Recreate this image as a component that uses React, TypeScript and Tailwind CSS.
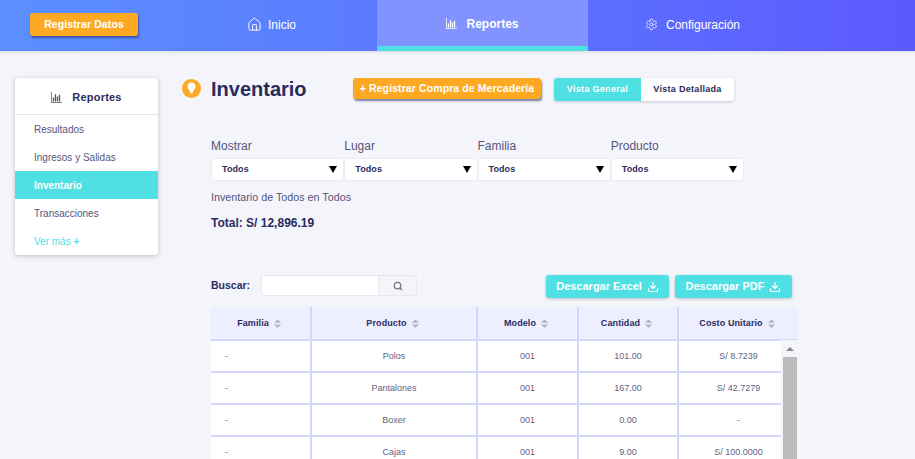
import { Download, House, Search, Settings } from 'lucide-react'

function ChartIcon({ className }: { className: string }) {
  return (
    <svg viewBox="0 0 12 12" className={className} fill="currentColor">
      <path d="M0 0h.8v11.2H12v.8H0z" />
      <path d="M2 6h1.4v4.4H2zM4.2 2.5h1.4v7.9H4.2zM6.4 5h1.4v5.4H6.4zM8.6 3h1.4v7.4H8.6z" />
    </svg>
  )
}

function SortIcon() {
  return (
    <svg viewBox="0 0 8 10" className="ml-[5px] h-[9px] w-[7px] text-[#b4b5c4]" fill="currentColor">
      <path d="M4 0l4 4H0zM4 10L0 6h8z" />
    </svg>
  )
}

function Select() {
  return (
    <div className="flex h-[23px] flex-1 items-center justify-between rounded-[2px] border border-[#eceef4] bg-white pl-[10px] pr-[6px] text-[9px] font-bold tracking-[0.1px] text-[#2b2b5e]">
      <span>Todos</span>
      <svg viewBox="0 0 8 7" className="h-[7px] w-2 text-black" fill="currentColor">
        <path d="M0 0h8L4 7z" />
      </svg>
    </div>
  )
}

const sidebarItems = ['Resultados', 'Ingresos y Salidas', 'Inventario', 'Transacciones']
const filters = ['Mostrar', 'Lugar', 'Familia', 'Producto']
const columns = [
  { label: 'Familia', w: 'w-[101px]' },
  { label: 'Producto', w: 'w-[166px]' },
  { label: 'Modelo', w: 'w-[101px]' },
  { label: 'Cantidad', w: 'w-[100px]' },
  { label: 'Costo Unitario', w: 'flex-1' },
]
const rows = [
  ['-', 'Polos', '001', '101.00', 'S/ 8.7239'],
  ['-', 'Pantalones', '001', '167.00', 'S/ 42.7279'],
  ['-', 'Boxer', '001', '0.00', '-'],
  ['-', 'Cajas', '001', '9.00', 'S/ 100.0000'],
]

export default function App() {
  return (
    <div className="h-[459px] overflow-hidden bg-[#f4f5fa] font-['Liberation_Sans',Arial,sans-serif]">
      <header className="flex h-[51px] bg-gradient-to-r from-[#5b8fff] to-[#5c59ff] shadow-[0_1px_3px_rgba(0,0,0,0.12)]">
        <div className="flex w-[166px] items-start pl-[30px] pt-[13px]">
          <button className="h-[23px] w-[108px] rounded-[3px] bg-[#fea922] text-[10.5px] font-bold tracking-[0.1px] text-white shadow-[1px_2px_2px_rgba(40,50,110,0.6)]">
            Registrar Datos
          </button>
        </div>
        <div className="flex w-[211px] items-center justify-center gap-[6px] pb-[3px] pt-[1px] text-[12px] text-white">
          <House className="h-[15px] w-[15px]" strokeWidth={1.5} />
          Inicio
        </div>
        <div className="flex w-[211px] items-center justify-center gap-[9px] border-b-[5px] border-[#4fe0e4] bg-[#8093ff] pt-[1px] text-[12px] font-bold text-white">
          <ChartIcon className="h-[11px] w-[11px]" />
          Reportes
        </div>
        <div className="flex w-[211px] items-center justify-center gap-[8px] pb-[3px] pr-[2px] pt-[1px] text-[12px] text-white">
          <Settings className="h-[13px] w-[13px]" strokeWidth={1.4} />
          Configuración
        </div>
      </header>

      <div className="flex pl-[15px] pt-[27px]">
        <aside className="h-[177px] w-[143px] overflow-hidden rounded-[3px] bg-white shadow-[0_1px_4px_rgba(60,60,90,0.3)]">
          <div className="flex h-[37px] items-center justify-center gap-[10px] border-b border-[#e4e5ea] pt-[2px] text-[11px] font-bold tracking-[0.2px] text-[#2b2b5e]">
            <ChartIcon className="h-[11px] w-[11px] text-[#555]" />
            Reportes
          </div>
          {sidebarItems.map((item) => (
            <div
              key={item}
              className={
                item === 'Inventario'
                  ? 'flex h-[28px] items-center bg-[#4fe0e4] pl-[19px] text-[10px] font-bold text-white'
                  : 'flex h-[28px] items-center pl-[19px] text-[10px] text-[#55557a]'
              }
            >
              {item}
            </div>
          ))}
          <div className="flex h-[28px] items-center pl-[19px] text-[10px] text-[#4fe0e4]">Ver más&nbsp;<span className="font-bold">+</span></div>
        </aside>

        <main className="ml-[24px] w-[616px]">
          <div className="flex h-[23px] items-start">
            <svg viewBox="0 0 19 19" className="mt-[1px] h-[19px] w-[19px]">
              <circle cx="9.5" cy="9.5" r="9.5" fill="#fea922" />
              <path d="M9.5 3.6a4 4 0 0 1 4 4c0 1.8-1.2 2.7-2 4.2-.4.7-.7 1.6-.9 2.4H8.4c-.2-.8-.5-1.7-.9-2.4-.8-1.5-2-2.4-2-4.2a4 4 0 0 1 4-4z" fill="#fff" />
            </svg>
            <h1 className="ml-[10px] w-[142px] text-[20px] leading-[22px] font-bold text-[#2b2b5e]">Inventario</h1>
            <button className="h-[21px] w-[188px] whitespace-nowrap rounded-[3px] bg-[#fea922] text-[10.5px] font-bold tracking-[0.1px] text-white shadow-[1px_2px_2px_rgba(40,50,110,0.6)]">
              + Registrar Compra de Mercadería
            </button>
            <div className="ml-[13px] flex h-[23px] w-[180px] overflow-hidden rounded-[3px] bg-white text-[9px] font-bold tracking-[0.3px] shadow-[0_1px_3px_rgba(60,60,90,0.25)]">
              <div className="flex w-[87px] items-center justify-center bg-[#4fe0e4] text-white">Vista General</div>
              <div className="flex flex-1 items-center justify-center text-[#2b2b5e]">Vista Detallada</div>
            </div>
          </div>

          <div className="ml-[29px] mt-[38px] flex w-[533px]">
            {filters.map((f) => (
              <div key={f} className="flex-1">
                <div className="h-[19px] text-[12px] leading-[15px] text-[#55557a]">{f}</div>
                <Select />
              </div>
            ))}
          </div>

          <div className="ml-[29px] mt-[9px] text-[10.75px] leading-[14px] text-[#55557a]">Inventario de Todos en Todos</div>
          <div className="ml-[29px] mt-[12px] text-[12px] leading-[14px] font-bold text-[#2b2b5e]">Total: S/ 12,896.19</div>

          <div className="ml-[29px] mt-[45px] flex h-[23px] items-start">
            <span className="w-[50px] pt-[3px] text-[10.5px] leading-[14px] font-bold text-[#2b2b5e]">Buscar:</span>
            <div className="flex h-[21px] w-[156px] overflow-hidden rounded-[3px] border border-[#e8e9f0] bg-white">
              <div className="flex-1" />
              <div className="flex w-[38px] items-center justify-center border-l border-[#e8e9f0] bg-[#f4f5fa]">
                <Search className="h-[10px] w-[10px] text-[#777]" strokeWidth={3} />
              </div>
            </div>
            <button className="ml-[129px] flex h-[23px] w-[123px] items-center justify-center gap-[5px] rounded-[3px] bg-[#4fe0e4] text-[11px] font-bold text-white shadow-[0_1px_3px_rgba(60,60,90,0.3)]">
              Descargar Excel
              <Download className="h-[12px] w-[12px]" strokeWidth={2.4} />
            </button>
            <button className="ml-[6px] flex h-[23px] w-[117px] items-center justify-center gap-[5px] rounded-[3px] bg-[#4fe0e4] text-[11px] font-bold text-white shadow-[0_1px_3px_rgba(60,60,90,0.3)]">
              Descargar PDF
              <Download className="h-[12px] w-[12px]" strokeWidth={2.4} />
            </button>
          </div>

          <div className="relative ml-[29px] mt-[9px] w-[587px]">
            <div className="flex h-[34px] rounded-t-[3px] border-b-2 border-[#d3d5fb] bg-[#eeeffe]">
              {columns.map((c) => (
                <div
                  key={c.label}
                  className={`flex ${c.w} items-center justify-center border-r-2 border-[#d3d5fb] pr-[3px] pt-[1px] text-[9px] font-bold tracking-[0.1px] text-[#2b2b5e] last:border-r-0`}
                >
                  {c.label}
                  <SortIcon />
                </div>
              ))}
            </div>
            {rows.map((r) => (
              <div key={r[1]} className="flex h-[32px] border-b-2 border-[#d3d5fb] bg-white text-[9px] text-[#62627f]">
                {r.map((cell, i) => (
                  <div
                    key={i}
                    className={`flex ${columns[i].w} items-center border-r-2 border-[#d3d5fb] pt-[2px] last:border-r-0 ${i === 0 ? 'pl-[14px]' : 'justify-center'}`}
                  >
                    {cell}
                  </div>
                ))}
              </div>
            ))}
            <div className="absolute bottom-0 right-0 top-[33px] flex w-[17px] flex-col bg-[#f4f5fa]">
              <div className="flex h-[17px] items-center justify-center">
                <svg viewBox="0 0 8 4" className="h-[4px] w-2 text-[#8a8a8a]" fill="currentColor">
                  <path d="M4 0l4 4H0z" />
                </svg>
              </div>
              <div className="ml-[2px] mr-[1px] flex-1 bg-[#bcbcbc]" />
            </div>
          </div>
        </main>
      </div>
    </div>
  )
}
